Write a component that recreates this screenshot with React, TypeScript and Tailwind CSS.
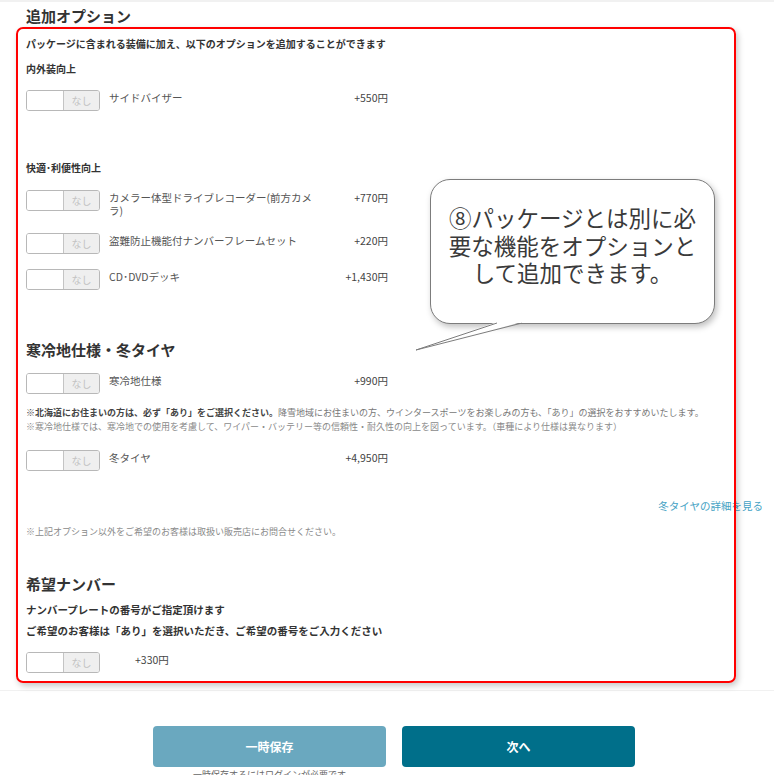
import React from "react";

/* Option row toggle: white "あり" half + grey "なし" half */
function Toggle() {
  return (
    <div className="flex h-[21px] w-[74px] shrink-0 overflow-hidden rounded-[3px] border border-[#b8b8b8]">
      <div className="w-[36px] bg-white" />
      <div className="flex flex-1 items-center justify-center border-l border-[#c4c4c4] bg-[#efefef] text-[10px] text-[#c2c2c2]">
        なし
      </div>
    </div>
  );
}

function OptionRow({ label, price, className = "" }: { label: string; price: string; className?: string }) {
  return (
    <div className={["flex items-start", className].join(" ")}>
      <Toggle />
      <div className="ml-[9px] mt-[1px] w-[206px] text-[10.5px] leading-[13px] text-[#555]">{label}</div>
      <div className="mt-[1px] w-[73px] text-right text-[10.5px] leading-[13px] text-[#444]">{price}</div>
    </div>
  );
}

export default function App() {
  return (
    <div className="relative h-[775px] w-[774px] overflow-hidden bg-white font-['Noto_Sans_CJK_JP','Noto_Sans',sans-serif] text-[#333]">
      <div className="h-[2px] bg-[#f1f1f1]" />

      <div className="pl-[26px] pr-[11px]">
        {/* 追加オプション */}
        <h2 className="mt-[4px] text-[15px] font-bold leading-[20px] text-[#333]">追加オプション</h2>
        <p className="mt-[11px] text-[10px] font-bold leading-[14px]">
          パッケージに含まれる装備に加え、以下のオプションを追加することができます
        </p>
        <p className="mt-[11px] text-[10px] font-bold leading-[14px]">内外装向上</p>
        <OptionRow className="mt-[14px]" label="サイドバイザー" price="+550円" />

        <p className="mt-[50px] text-[10px] font-bold leading-[14px]">快適･利便性向上</p>
        <OptionRow className="mt-[15px]" label="カメラー体型ドライブレコーダー(前方カメラ)" price="+770円" />
        <OptionRow className="mt-[16px]" label="盗難防止機能付ナンバーフレームセット" price="+220円" />
        <OptionRow className="mt-[15px]" label="CD･DVDデッキ" price="+1,430円" />

        {/* 寒冷地仕様・冬タイヤ */}
        <h2 className="mt-[50px] text-[15px] font-bold leading-[20px]">寒冷地仕様・冬タイヤ</h2>
        <OptionRow className="mt-[13px]" label="寒冷地仕様" price="+990円" />
        <div className="mt-[12px] text-[9px] leading-[14px]">
          <p>
            <span className="font-bold text-[#444]">※北海道にお住まいの方は、必ず「あり」をご選択ください。</span>
            <span className="text-[#777]">降雪地域にお住まいの方、ウインタースポーツをお楽しみの方も、「あり」の選択をおすすめいたします。</span>
          </p>
          <p className="text-[#8a8a8a]">
            ※寒冷地仕様では、寒冷地での使用を考慮して、ワイパー・バッテリー等の信頼性・耐久性の向上を図っています。（車種により仕様は異なります）
          </p>
        </div>
        <OptionRow className="mt-[16px]" label="冬タイヤ" price="+4,950円" />
        <div className="mt-[28px] text-right text-[10.5px] leading-[14px] text-[#45a2c4]">冬タイヤの詳細を見る</div>
        <p className="mt-[12px] text-[9px] leading-[14px] text-[#8a8a8a]">
          ※上記オプション以外をご希望のお客様は取扱い販売店にお問合せください。
        </p>

        {/* 希望ナンバー */}
        <h2 className="mt-[35px] text-[15px] font-bold leading-[20px]">希望ナンバー</h2>
        <p className="mt-[9px] text-[10.5px] font-bold leading-[14px]">ナンバープレートの番号がご指定頂けます</p>
        <p className="mt-[7px] text-[10.5px] font-bold leading-[14px]">
          ご希望のお客様は「あり」を選択いただき、ご希望の番号をご入力ください
        </p>
        <div className="mt-[14px] flex items-start">
          <Toggle />
          <div className="ml-[35px] mt-[1px] text-[10.5px] leading-[13px] text-[#444]">+330円</div>
        </div>
      </div>

      {/* footer buttons */}
      <div className="mt-[17px] border-t border-[#f1f1f1] pt-[35px]">
        <div className="flex justify-center gap-[16px] pl-[14px]">
          <div className="flex w-[233px] flex-col items-center">
            <button className="h-[41px] w-full rounded-[4px] bg-[#6aa8bf] text-[12px] font-bold text-white">一時保存</button>
            <p className="mt-[2px] text-[9px] leading-[12px] text-[#666]">一時保存するにはログインが必要です</p>
          </div>
          <button className="h-[41px] w-[233px] rounded-[4px] bg-[#006f8a] text-[12px] font-bold text-white">次へ</button>
        </div>
      </div>

      {/* annotation: red frame */}
      <div className="pointer-events-none absolute left-[16px] top-[27px] h-[656px] w-[720px] rounded-[7px] border-2 border-[#ff0000] shadow-[2px_3px_6px_rgba(0,0,0,0.22)]" />

      {/* annotation: speech bubble */}
      <div className="absolute left-[430px] top-[179px] h-[145px] w-[285px] rounded-[20px] border border-[#7c7c7c] bg-white pt-[24px] text-center text-[22.5px] leading-[27.5px] text-[#3a3a3a] shadow-[2px_3px_6px_rgba(0,0,0,0.25)]">
        ⑧パッケージとは別に必
        <br />
        要な機能をオプションと
        <br />
        して追加できます。
      </div>
      <svg className="absolute left-[410px] top-[318px]" width="120" height="40" viewBox="0 0 120 40">
        <polygon points="87,4 6,32 112,4" fill="white" />
        <polyline points="87,5 6,32 112,5" fill="none" stroke="#7c7c7c" strokeWidth="1" />
        <rect x="87.5" y="0" width="24" height="5" fill="white" />
      </svg>
    </div>
  );
}
